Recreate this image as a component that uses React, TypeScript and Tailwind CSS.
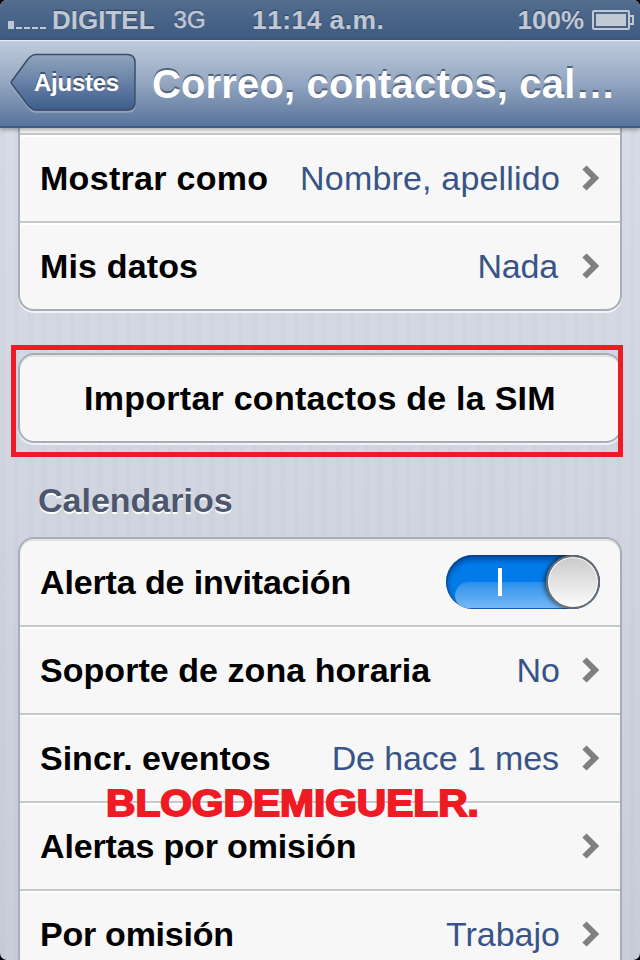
import type { ReactNode } from "react";
import { clsx } from "clsx";

function StatusBar() {
    return (
        <header className="relative flex h-10 items-center bg-linear-to-b from-[#536d8f] to-[#3d5a80] text-[26px] leading-10 font-bold text-[#c0c8d4] [text-shadow:0_-1px_1px_#2c415e]">
            <div className="mt-2.5 flex h-2 items-end gap-0.5 pl-2">
                <i className="h-2 w-1.5 bg-current" />
                <i className="h-0.5 w-1.5 bg-current" />
                <i className="h-0.5 w-1.5 bg-current" />
                <i className="h-0.5 w-1.5 bg-current" />
                <i className="h-0.5 w-1.5 bg-current" />
            </div>
            <span className="ml-1.5">DIGITEL</span>
            <span className="ml-[19px] text-2xl leading-10 font-normal [-webkit-text-stroke:0.5px_#c0c8d4]">3G</span>
            <span className="absolute left-[252px] text-[26.5px] tracking-[0.4px] [font-kerning:none]">11:14 a.m.</span>
            <span className="mr-2 ml-auto">100%</span>
            <svg width="42" height="20" viewBox="0 0 42 20" className="mr-1.5" fill="none">
                <rect x="1" y="1" width="36" height="18" rx="1" stroke="#c0c8d4" strokeWidth="2" />
                <rect x="4" y="4" width="30" height="12" fill="#c0c8d4" />
                <path d="M38 6h3v8h-3" stroke="#c0c8d4" strokeWidth="2" />
            </svg>
        </header>
    );
}

function NavBar() {
    return (
        <nav className="relative flex h-22 items-center border-t border-b-2 border-t-[#e9eef4] border-b-[#3d5a82] bg-linear-to-b from-[#bfccdd] via-[#93a5c0] to-[#58749b] text-white shadow-[0_2px_4px_rgba(0,0,0,0.3)]">
            <button className="relative -mt-px ml-2.5 flex h-[60px] w-[127px] items-center">
                <svg width="127" height="60" viewBox="0 0 127 60" className="absolute inset-0" fill="none">
                    <defs>
                        <linearGradient id="back" x1="0" y1="0" x2="0" y2="1">
                            <stop offset="0" stopColor="#92a4bf" />
                            <stop offset="0.5" stopColor="#6781a7" />
                            <stop offset="1" stopColor="#3d5d8c" />
                        </linearGradient>
                    </defs>
                    <path d="M26 3H117Q125 3 125 11V51Q125 59 117 59H26Q22 59 18 54L1 32Q0 31 1 30L18 8Q22 3 26 3Z" stroke="#a9b8cc" strokeOpacity="0.7" strokeWidth="1.5" />
                    <path d="M26 1.5H117Q125 1.5 125 9.5V49Q125 57 117 57H26Q22 57 18 52.500L1.500 30.500Q1 29.500 1.500 28.500L18 6Q22 1.500 26 1.500Z" fill="url(#back)" stroke="#3c4d66" strokeWidth="1.5" />
                </svg>
                <span className="relative pl-6 text-2xl font-bold tracking-[-0.25px] [text-shadow:0_-2px_0_#3f5270]">Ajustes</span>
            </button>
            <h1 className="ml-[15px] text-[40px] font-bold tracking-[0.15px] whitespace-nowrap [text-shadow:0_-2px_0_#55637a]">Correo, contactos, cal…</h1>
        </nav>
    );
}

function Chevron() {
    return (
        <svg width="18" height="26" viewBox="0 0 18 26" className="ml-[22px]" fill="none">
            <path d="M2.500 2.500L13 13L2.500 23.500" stroke="#7f7f7f" strokeWidth="6" />
        </svg>
    );
}

type RowProps = {
    label: string;
    value?: string;
    labelClass?: string;
    valueClass?: string;
    last?: boolean;
    children?: ReactNode;
};

function Row({ label, value, labelClass, valueClass, last, children }: RowProps) {
    return (
        <div className={clsx("flex items-center px-5", last ? "h-[86px]" : "h-22 border-b-2 border-[#c7c8ca] shadow-[0_2px_0_#fff]")}>
            <span className={clsx("text-[34px] leading-10 font-bold text-black", labelClass)}>{label}</span>
            <span className={clsx("ml-auto text-[34px] leading-10 text-[#385487]", valueClass)}>{value}</span>
            {children ?? <Chevron />}
        </div>
    );
}

function Toggle() {
    return (
        <button role="switch" aria-checked="true" className="relative flex h-[54px] w-[154px] items-center overflow-hidden rounded-full bg-[#007be9] shadow-[inset_0_4px_6px_rgba(0,30,90,0.6),inset_0_0_0_1.5px_rgba(40,80,140,0.6)]">
            <span className="absolute bottom-px left-[9px] h-[26px] w-[140px] rounded-t-[20px] rounded-bl-[18px] bg-linear-to-b from-[#2890ec] to-[#73b8f5]" />
            <span className="relative ml-[52px] h-7 w-1 bg-white shadow-[0_-1px_0_#1565b5]" />
            <span className="absolute top-0 right-0 size-[54px] rounded-full border-2 border-[#6c6c6c] bg-linear-to-b from-[#cacaca] to-[#fcfcfc] shadow-[inset_0_0_0_1px_#fff,-2px_0_4px_rgba(0,0,0,0.5)]" />
        </button>
    );
}

export default function App() {
    return (
        <div className="relative h-[960px] w-[640px] overflow-hidden bg-black font-['Liberation_Sans',Arial,sans-serif]">
            <div className="flex h-full flex-col overflow-hidden rounded-[7px] bg-linear-to-b from-[#d9dee8] to-[#c9cdd9]">
                <StatusBar />
                <div className="relative z-10">
                    <NavBar />
                </div>
                <main className="flex-1 overflow-hidden bg-[repeating-linear-gradient(90deg,rgba(90,110,150,0.03)_0_5px,transparent_5px_14px)] px-[18px]">
                    <section className="rounded-b-2xl border-x-2 border-b-2 border-[#a8adb8] bg-[#f7f7f7] shadow-[0_2px_0_#f0f2f6]">
                        <div className="h-[7px] border-b-2 border-[#c7c8ca] shadow-[0_2px_0_#fff]" />
                        <Row label="Mostrar como" value="Nombre, apellido" labelClass="tracking-[0.3px]" valueClass="tracking-[0.18px]" />
                        <Row label="Mis datos" value="Nada" labelClass="tracking-[0.15px]" valueClass="pr-0.5 tracking-[-0.2px]" last />
                    </section>

                    <section className="relative mt-[42px] flex h-[90px] items-center justify-center rounded-2xl border-2 border-[#a8adb8] bg-[#f7f7f7] text-[34px] font-bold tracking-[0.25px] shadow-[0_2px_0_#f0f2f6,inset_0_2px_1px_#e1e2e4]">
                        Importar contactos de la SIM
                        <div className="absolute -top-2.5 -left-[9px] h-28 w-[612px] border-[5px] border-[#ee1b24]" />
                    </section>

                    <h2 className="mt-[37px] ml-5 text-[34px] leading-10 font-bold text-[#4c566c] [text-shadow:0_2px_0_#fff]">Calendarios</h2>

                    <section className="mt-[17px] rounded-t-2xl border-x-2 border-t-2 border-[#a8adb8] bg-[#f7f7f7] shadow-[inset_0_2px_1px_#e1e2e4]">
                        <Row label="Alerta de invitación" labelClass="tracking-[-0.13px]">
                            <Toggle />
                        </Row>
                        <Row label="Soporte de zona horaria" value="No" labelClass="tracking-[0.05px]" />
                        <Row label="Sincr. eventos" value="De hace 1 mes" valueClass="pr-px tracking-[-0.1px]" />
                        <Row label="Alertas por omisión" labelClass="tracking-[-0.16px]" />
                        <Row label="Por omisión" value="Trabajo" labelClass="tracking-[-0.25px]" />
                    </section>
                </main>
            </div>
            <div className="absolute top-[783px] left-[106px] z-20 origin-left scale-x-[1.13] text-[36px] leading-[42px] font-bold whitespace-nowrap text-[#ee1b24] [-webkit-text-stroke:1.8px_#ee1b24]">
                BLOGDEMIGUELR.
            </div>
        </div>
    );
}
